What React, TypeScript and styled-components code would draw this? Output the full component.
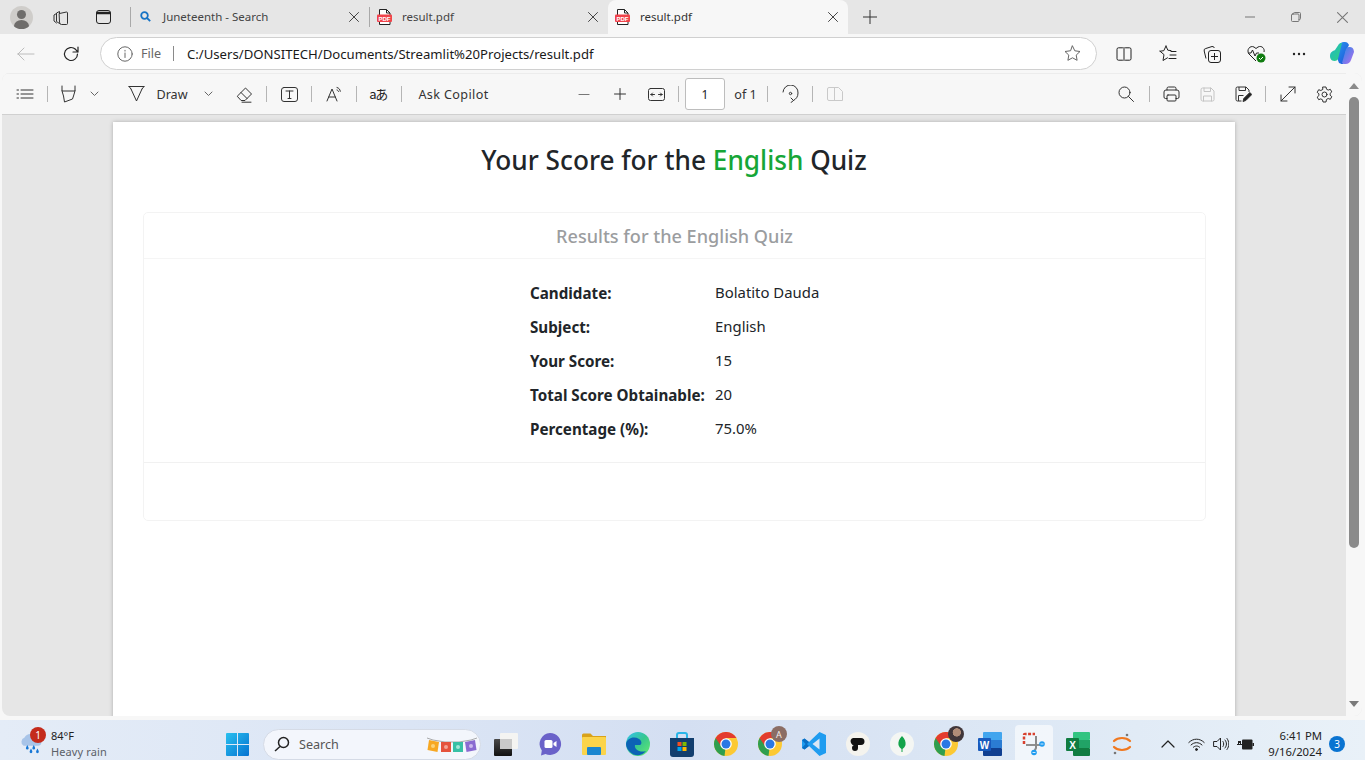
import React from "react";
import styled, { createGlobalStyle } from "styled-components";

const Global = createGlobalStyle`
  html, body { margin: 0; padding: 0; height: 100%; overflow: hidden; }
  body { font-family: "Noto Sans", "Open Sans", sans-serif; color: #222; }
  #root { height: 760px; width: 1365px; }
`;

const Screen = styled.div`
  display: flex; flex-direction: column; width: 1365px; height: 760px; overflow: hidden; background: #f7f7f7;
`;

/* ---------- tab strip ---------- */
const TabStrip = styled.div`
  display: flex; align-items: stretch; height: 34px; flex: none; background: #e6e6e6;
`;
const StripBtn = styled.div<{ $w: number; $ml?: number }>`
  display: flex; align-items: center; justify-content: center; flex: none;
  width: ${p => p.$w}px; margin-left: ${p => p.$ml ?? 0}px;
`;
const Avatar = styled.div`
  position: relative; width: 23px; height: 23px; border-radius: 50%; background: #cfcdca; overflow: hidden;
  &::before { content: ""; position: absolute; left: 7px; top: 4px; width: 9px; height: 9px; border-radius: 50%; background: #6f6d6b; }
  &::after { content: ""; position: absolute; left: 4px; top: 14px; width: 15px; height: 12px; border-radius: 50%; background: #6f6d6b; }
`;
const TabSep = styled.div`
  width: 1px; height: 20px; background: #a9a9a9; align-self: center; flex: none;
`;
const Tab = styled.div<{ $active?: boolean; $w: number }>`
  display: flex; align-items: center; flex: none; width: ${p => p.$w}px; padding: 0 10px 0 7px; box-sizing: border-box;
  font-size: 11.5px; color: #444;
  ${p => p.$active && `background:#f7f7f7; border-radius: 8px 8px 0 0; color:#333;`}
`;
const TabIcon = styled.span`
  width: 15px; height: 16px; display: flex; align-items: center; justify-content: center; flex: none; margin-bottom: 1px;
`;
const TabTitle = styled.span`
  flex: 1; margin: 0 0 2px 10px; white-space: nowrap;
`;

/* ---------- address bar ---------- */
const AddressRow = styled.div`
  display: flex; align-items: center; height: 39px; flex: none; background: #f7f7f7;
`;
const NavBtn = styled.div<{ $w: number }>`
  display: flex; align-items: center; justify-content: center; flex: none; width: ${p => p.$w}px;
`;
const Pill = styled.div`
  display: flex; align-items: center; box-sizing: border-box; width: 997px; height: 33px; margin: 0 5px 0 10px; padding: 0 15px 0 16px;
  background: #fff; border: 1px solid #d0d0d0; border-radius: 17px; flex: none; font-size: 12.6px;
`;
const FileLabel = styled.span`
  margin-left: 8px; color: #666; width: 32px;
`;
const PillSep = styled.span`
  width: 1px; height: 15px; background: #8a8a8a; flex: none;
`;
const Url = styled.span`
  margin-left: 13px; padding-top: 1px; flex: 1; font-size: 13.15px; color: #1a1a1a; white-space: nowrap;
`;

/* ---------- pdf toolbar ---------- */
const ViewerShell = styled.div`
  flex: 1; min-height: 0; display: flex; margin: 0 3px 4px 2px; background: #e6e6e6; border-radius: 8px; overflow: hidden;
`;
const ViewerMain = styled.div`
  flex: 1; min-width: 0; display: flex; flex-direction: column;
`;
const Toolbar = styled.div`
  display: flex; align-items: center; height: 42px; flex: none; padding-left: 5px; box-sizing: border-box;
  background: #f7f7f7; border-bottom: 1px solid #d0d0d0; border-top: 1px solid #ececec; font-size: 12.6px; color: #333;
`;
const Tool = styled.div<{ $w: number; $ml?: number }>`
  display: flex; align-items: center; justify-content: center; flex: none; white-space: nowrap;
  width: ${p => p.$w}px; margin-left: ${p => p.$ml ?? 0}px;
`;
const ToolSep = styled.div<{ $ml?: number }>`
  flex: none; width: 8px; margin-left: ${p => p.$ml ?? 0}px; display: flex; justify-content: center;
  &::before { content: ""; width: 1px; height: 16px; background: #b5b5b5; }
`;
const AskLabel = styled.span`
  letter-spacing: .03em;
`;
const TranslateGlyph = styled.span`
  font-family: "Noto Sans CJK JP", "Noto Sans", sans-serif; font-size: 13px; letter-spacing: -1.5px; color: #222; line-height: 16px;
`;
const PageInput = styled.div`
  flex: none; box-sizing: border-box; width: 40px; height: 32px; margin-left: 3px; background: #fff;
  border: 1px solid #bdbdbd; border-radius: 3px; display: flex; align-items: center; justify-content: center; font-size: 12px; color: #222;
`;

/* ---------- document ---------- */
const DocArea = styled.div`
  flex: 1; min-height: 0; padding: 7px 0 0 111px; overflow: hidden;
`;
const Sheet = styled.div`
  box-sizing: border-box; width: 1122px; height: 640px; background: #fff; box-shadow: 0 0 4px rgba(0,0,0,.25); padding: 21px 30px 0;
`;
const Heading = styled.h1`
  margin: 0; height: 69px; text-align: center; font-size: 26.2px; line-height: 34px; font-weight: 500; color: #212529;
`;
const Accent = styled.span`
  color: #16a637;
`;
const Card = styled.div`
  box-sizing: border-box; width: 1063px; height: 309px; border: 1px solid #f3f3f3; border-radius: 5px; display: flex; flex-direction: column;
`;
const CardHead = styled.div`
  height: 45px; flex: none; border-bottom: 1px solid #f5f5f5; display: flex; align-items: center; justify-content: center;
  font-size: 18.1px; font-weight: 500; color: #9b9d9f;
`;
const CardBody = styled.div`
  flex: 1; display: grid; grid-template-columns: 185px 104px; justify-content: center; align-content: start; padding-top: 17px; border-bottom: 1px solid #f1f1f1;
`;
const CardFoot = styled.div`
  height: 57px; flex: none;
`;
const Label = styled.div`
  height: 34px; line-height: 34px; font-size: 15.2px; font-weight: 700; color: #212529; white-space: nowrap;
`;
const Value = styled.div`
  height: 34px; line-height: 32px; font-size: 14.9px; color: #212529; white-space: nowrap;
`;

/* ---------- scrollbar ---------- */
const ScrollTrack = styled.div`
  width: 16px; flex: none; background: #f7f7f7; display: flex; flex-direction: column; align-items: center;
`;
const ScrollArrow = styled.div<{ $up?: boolean }>`
  width: 0; height: 0; border-left: 5px solid transparent; border-right: 5px solid transparent; flex: none;
  ${p => p.$up ? `border-bottom: 6px solid #8b8b8b; margin-top: 10px;` : `border-top: 6px solid #7a7a7a; margin-top: 153px;`}
`;
const ScrollThumb = styled.div`
  width: 10px; height: 451px; background: #8b8b8b; border-radius: 5px; margin-top: 8px; flex: none;
`;

/* ---------- taskbar ---------- */
const Taskbar = styled.div`
  height: 40px; flex: none; display: flex; align-items: center; padding-top: 8px; box-sizing: border-box;
  background: linear-gradient(90deg, #e4ecf7 0%, #dbe5f5 30%, #d4dff2 50%, #dde8f5 75%, #e9f1f8 100%);
`;
const Weather = styled.div`
  width: 215px; flex: none; display: flex; align-items: center; height: 100%; padding-left: 19px; box-sizing: border-box; position: relative;
`;
const Badge = styled.span`
  position: absolute; left: 30px; top: -1px; width: 16px; height: 16px; border-radius: 50%; background: #c42b1c; color: #fff;
  font-size: 10px; display: flex; align-items: center; justify-content: center;
`;
const WeatherText = styled.div`
  margin-left: 8px; display: flex; flex-direction: column; font-size: 11px; line-height: 16px; white-space: nowrap;
`;
const Muted = styled.span`
  color: #5b6068; letter-spacing: .01em;
`;
const TaskSlot = styled.div<{ $active?: boolean }>`
  position: relative; flex: none; display: flex; align-items: center; justify-content: center; border-radius: 4px;
  width: ${p => p.$active ? 38 : 44}px; height: ${p => p.$active ? 38 : 36}px; margin: ${p => p.$active ? "0 3px" : "0"};
  ${p => p.$active && `background: rgba(255,255,255,.6);`}
`;
const TaskSearch = styled.div`
  flex: none; display: flex; align-items: center; box-sizing: border-box; width: 218px; height: 31px; margin-left: 4px; padding-left: 10px;
  background: #f3f6fc; border: 1px solid #d5dbe6; border-radius: 16px; font-size: 12.6px; color: #555; position: relative;
`;
const SearchWord = styled.span`
  margin-left: 9px;
`;
const Bunting = styled.span`
  position: absolute; right: 3px; top: 7px; display: flex;
`;
const StartGap = styled.div`
  width: 3px; flex: none;
`;
const Tray = styled.div`
  flex: 1; display: flex; align-items: center; padding-left: 13px;
`;
const TrayBtn = styled.div<{ $w: number }>`
  width: ${p => p.$w}px; flex: none; display: flex; justify-content: center; align-items: center;
`;
const Clock = styled.div`
  width: 61px; flex: none; text-align: right; font-size: 11.3px; line-height: 16px; color: #222; white-space: nowrap;
`;
const NotifCount = styled.div`
  width: 16px; height: 16px; margin-left: 7px; flex: none; border-radius: 50%; background: #0a74d1; color: #fff; font-size: 10px;
  display: flex; align-items: center; justify-content: center;
`;
const CornerBadge = styled.span`
  position: absolute; top: 0; right: 5px; width: 16px; height: 16px; border-radius: 50%; background: #8b6d64; color: #f4ecea; font-size: 9px;
  display: flex; align-items: center; justify-content: center;
`;
const PhotoBadge = styled.span`
  position: absolute; top: 0; right: 4px; width: 16px; height: 16px; border-radius: 50%;
  background: radial-gradient(circle at 55% 40%, #b08c78 0 30%, #40363a 34% 100%);
`;

/* ---------- icons ---------- */
const S = (p: { w?: number; h?: number; vb?: string; children: React.ReactNode; c?: string; sw?: number }) => (
  <svg width={p.w ?? 16} height={p.h ?? 16} viewBox={p.vb ?? "0 0 16 16"} fill="none" stroke={p.c ?? "#333"} strokeWidth={p.sw ?? 1} strokeLinecap="round" strokeLinejoin="round">{p.children}</svg>
);
const PdfIcon = () => (
  <svg width="15" height="16" viewBox="0 0 15 16">
    <path d="M2.5.5h7l3.5 3.5v11.5h-10.500z" fill="#fff" stroke="#222" />
    <path d="M9.500.5v3.500h3.500" fill="none" stroke="#222" />
    <rect x="0" y="5.500" width="15" height="7.500" rx="1" fill="#f0444b" />
    <text x="7.500" y="11.700" textAnchor="middle" fontSize="6" fontWeight="700" fill="#fff" fontFamily="Liberation Sans, sans-serif">PDF</text>
  </svg>
);
const CloseX = ({ s = 10, c = "#444" }: { s?: number; c?: string }) => (
  <S w={s} h={s} vb="0 0 10 10" c={c}><path d="M.5.5l9 9M9.500.5l-9 9" /></S>
);
const Chevron = () => <S w={9} h={6} vb="0 0 9 6" c="#666"><path d="M1 1l3.500 3.500L8 1" /></S>;
const Chrome = () => (
  <svg width="24" height="24" viewBox="0 0 24 24">
    <circle cx="12" cy="12" r="12" fill="#fcc934" />
    <path d="M1.600 6A12 12 0 0 0 10.500 23.900L12 12z" fill="#2f9e4f" />
    <path d="M1.600 6A12 12 0 0 1 22.400 6H12L7 14z" fill="#e33b2e" />
    <circle cx="12" cy="12" r="5.800" fill="#fff" />
    <circle cx="12" cy="12" r="4.500" fill="#2a78e4" />
  </svg>
);

const toolbarIcons = {
  list: <S w={18} h={14} vb="0 0 18 14"><path d="M1 3h1.500M1 7h1.500M1 11h1.500M5 3h12M5 7h12M5 11h12" /></S>,
  highlight: <S w={17} h={18} vb="0 0 17 18"><path d="M2 1v5h13V1M2 6l1.500 5 1 6 8-3 1-3L15 6" /></S>,
  draw: <S w={17} h={18} vb="0 0 17 18"><path d="M1 1.500h15M3 4l5.500 12L14 4" /><path d="M1 1.500L3 4M16 1.500L14 4" /></S>,
  eraser: <S w={17} h={17} vb="0 0 17 17"><path d="M1.500 10L9.500 2l6 6-6.500 6.500H5.500zM5 6.500l6 6M6 16.200h9" /></S>,
  text: <S w={17} h={15} vb="0 0 17 15"><rect x=".5" y=".5" width="16" height="14" rx="2.500" /><path d="M5 4h7M8.500 4v7.500M7 11.500h3" /></S>,
  read: <S w={17} h={16} vb="0 0 17 16"><path d="M1 15L6 3l5 12M2.800 11h6.500" /><path d="M11 1.500c2 .5 3 1.800 3.300 3.800M11 4c1 .3 1.300.8 1.500 1.500" /></S>,
  minus: <S w={12} h={3} vb="0 0 12 3" c="#777" sw={1.200}><path d="M1 1.500h10" /></S>,
  plus: <S w={12} h={12} vb="0 0 12 12"><path d="M.5 6h11M6 .5v11" /></S>,
  fit: <S w={17} h={13} vb="0 0 17 13"><rect x=".5" y=".5" width="16" height="12" rx="2" /><path d="M3 6.500h3.500M3 6.500l1.500-1.500M3 6.500L4.500 8M14 6.500h-3.500M14 6.500L12.500 5M14 6.500L12.500 8" /></S>,
  rotate: <S w={17} h={18} vb="0 0 17 18"><path d="M1 7a7 7 0 0 1 15 1c0 4-2 6-4.500 7.500" /><path d="M9 13l2.500 2.500L9 17.500" /><circle cx="8.500" cy="8.500" r="1.200" /></S>,
  twoPage: <S w={16} h={14} vb="0 0 16 14" c="#c9c9c9"><path d="M7.500.5H2a1.500 1.500 0 0 0-1.500 1.500v10A1.500 1.500 0 0 0 2 13.500h5.500M7.500.5v13M7.500.5h4l4 4v9h-8" /></S>,
  search: <S w={16} h={16}><circle cx="6.500" cy="6.500" r="5.500" /><path d="M10.500 10.500l5 5" /></S>,
  print: <S w={17} h={16} vb="0 0 17 16"><path d="M4 4V2.500A1.500 1.500 0 0 1 5.500 1h6A1.500 1.500 0 0 1 13 2.500V4M4 12.500H2.500A1.500 1.500 0 0 1 1 11V6a2 2 0 0 1 2-2h11a2 2 0 0 1 2 2v5a1.500 1.500 0 0 1-1.500 1.500H13" /><rect x="4" y="9" width="9" height="6" rx="1" /></S>,
  save: <S w={15} h={15} vb="0 0 15 15" c="#c4c4c4"><path d="M1 2.500A1.500 1.500 0 0 1 2.500 1h8.500L14 4v8.500a1.500 1.500 0 0 1-1.500 1.500h-10A1.500 1.500 0 0 1 1 12.500zM4 1v3.500h6.500V1M3.500 14V9h8v5" /></S>,
  saveAs: <svg width="17" height="16" viewBox="0 0 17 16" fill="none" stroke="#333" strokeLinejoin="round"><path d="M6.500 15H2.500A1.500 1.500 0 0 1 1 13.500v-11A1.500 1.500 0 0 1 2.500 1h8.500l3 3v2M4 1v3.500h6.500V1M3.500 15V9.500h5" /><path d="M8 15.500l.8-3 6-6 2 2-6 6z" fill="#222" /></svg>,
  expand: <S w={16} h={16}><path d="M1 15L15 1M9 1h6v6M1 9v6h6" /></S>,
  gear: <S w={17} h={17} vb="0 0 17 17"><path d="M7 1h3l.5 2.200 1.700.9 2.100-.8 1.500 2.600-1.700 1.500v1.800l1.700 1.500-1.500 2.600-2.100-.8-1.700.9L10 16H7l-.5-2.200-1.700-.9-2.100.8L1.200 11.100l1.700-1.500V7.800L1.200 6.300l1.500-2.600 2.100.8 1.700-.9z" /><circle cx="8.500" cy="8.500" r="2.500" /></S>,
};

const rows: [string, string][] = [
  ["Candidate:", "Bolatito Dauda"],
  ["Subject:", "English"],
  ["Your Score:", "15"],
  ["Total Score Obtainable:", "20"],
  ["Percentage (%):", "75.0%"],
];

const PinnedIcons = () => (
  <>
    <TaskSlot>
      <svg width="24" height="23" viewBox="0 0 24 23"><defs><linearGradient id="thumbA" x1="0" y1="0" x2="0" y2="1"><stop offset="0" stopColor="#4a4a4a" /><stop offset="1" stopColor="#111" /></linearGradient></defs><rect x="0" y="6" width="18" height="17" rx="1" fill="url(#thumbA)" /><rect x="6" y="0" width="18" height="16" rx="1" fill="#f4f4f2" /><rect x="6" y="6" width="12" height="10" fill="#c9c9c9" /></svg>
    </TaskSlot>
    <TaskSlot>
      <svg width="24" height="24" viewBox="0 0 24 24"><path d="M12 1a11 11 0 1 1-4.500 21L3 23.500l.8-5A11 11 0 0 1 12 1z" fill="#6a62c9" /><rect x="6.500" y="8" width="8" height="8" rx="1.500" fill="#fff" /><path d="M15.500 11l3-2v6l-3-2z" fill="#fff" /></svg>
    </TaskSlot>
    <TaskSlot>
      <svg width="24" height="22" viewBox="0 0 24 22"><path d="M0 2a1.500 1.500 0 0 1 1.500-1.500h7L11 3h13v3H0z" fill="#d9a21a" /><rect y="4" width="24" height="18" rx="1" fill="#fbd44b" /><rect x="5" y="14" width="14" height="8" rx="1" fill="#1a86d0" /></svg>
    </TaskSlot>
    <TaskSlot>
      <svg width="24" height="24" viewBox="0 0 24 24"><defs><linearGradient id="edgeA" x1="0" y1="0" x2="1" y2="1"><stop offset="0" stopColor="#35c1f1" /><stop offset=".5" stopColor="#36c78f" /><stop offset="1" stopColor="#66eb6e" /></linearGradient></defs><circle cx="12" cy="12" r="12" fill="url(#edgeA)" /><path d="M0 12C1 6 8 4 13 7c3 2 3 5 1 6H9c-1 4 4 8 11 6-5 6-12 5-16 1-2-2-4-5-4-8z" fill="#0c62b5" /></svg>
    </TaskSlot>
    <TaskSlot>
      <svg width="24" height="25" viewBox="0 0 24 25"><path d="M7 6V3a2 2 0 0 1 2-2h6a2 2 0 0 1 2 2v3" fill="none" stroke="#29b5e8" strokeWidth="2" /><path d="M0 6h24v16a3 3 0 0 1-3 3H3a3 3 0 0 1-3-3z" fill="#123e6e" /><rect x="7.500" y="10" width="4" height="4" fill="#f25022" /><rect x="12.500" y="10" width="4" height="4" fill="#7fba00" /><rect x="7.500" y="15" width="4" height="4" fill="#00a4ef" /><rect x="12.500" y="15" width="4" height="4" fill="#ffb900" /></svg>
    </TaskSlot>
    <TaskSlot><Chrome /></TaskSlot>
    <TaskSlot><Chrome /><CornerBadge>A</CornerBadge></TaskSlot>
    <TaskSlot>
      <svg width="24" height="24" viewBox="0 0 24 24"><path d="M17.500 0L24 3v18l-6.500 3L7 14l-4.500 3.500L0 16V8l2.500-1.500L7 10z" fill="#1f9cf0" /><path d="M17.500 6.500L10.500 12l7 5.500z" fill="#d8e6f5" /><path d="M0 8l2.500-1.500L7 10l-2 2 2 2-4.500 3.500L0 16l3.500-4z" fill="#0a6fc4" /></svg>
    </TaskSlot>
    <TaskSlot>
      <svg width="24" height="24" viewBox="0 0 24 24"><circle cx="12" cy="12" r="12" fill="#f4f3ee" /><path d="M7 6h8a3 3 0 0 1 0 7h-3v3a3 3 0 0 1-6 0 3 3 0 0 1 3-3h1a3 3 0 0 1-3-7z" fill="#111" /></svg>
    </TaskSlot>
    <TaskSlot>
      <svg width="24" height="24" viewBox="0 0 24 24"><circle cx="12" cy="12" r="12" fill="#f4f6f3" /><path d="M12 4c3 3 4 6 3.500 9-.5 2-2 3-3 4v3h-1v-3c-1-1-2.500-2-3-4C8 10 9 7 12 4z" fill="#13a34a" /></svg>
    </TaskSlot>
    <TaskSlot><Chrome /><PhotoBadge /></TaskSlot>
    <TaskSlot>
      <svg width="24" height="24" viewBox="0 0 24 24"><rect x="5" y="0" width="19" height="8" rx="1" fill="#41a5ee" /><rect x="5" y="8" width="19" height="8" fill="#2b7cd3" /><rect x="5" y="16" width="19" height="8" rx="1" fill="#103f91" /><rect x="0" y="6" width="13" height="13" rx="1" fill="#185abd" /><text x="6.500" y="16.500" textAnchor="middle" fontSize="10" fontWeight="700" fill="#fff" fontFamily="Liberation Sans, sans-serif">W</text></svg>
    </TaskSlot>
    <TaskSlot $active>
      <svg width="24" height="24" viewBox="0 0 24 24" fill="none"><path d="M2 12V3a1 1 0 0 1 1-1h10" stroke="#d8412f" strokeWidth="2.500" strokeDasharray="3 1.500" /><path d="M4 13h16" stroke="#8f8f8f" strokeWidth="2" /><path d="M14 4v12l-2 4" stroke="#8a8a8a" strokeWidth="2" /><circle cx="20" cy="12" r="2.800" fill="#1f9cf0" /><circle cx="12" cy="20.500" r="2.800" fill="#1f9cf0" /><path d="M18.500 12h3M10.500 20.500h3" stroke="#fff" strokeWidth=".8" /></svg>
    </TaskSlot>
    <TaskSlot>
      <svg width="24" height="24" viewBox="0 0 24 24"><rect x="7" y="0" width="17" height="8" rx="1" fill="#33c481" /><rect x="7" y="8" width="17" height="8" fill="#21a366" /><rect x="7" y="16" width="17" height="8" rx="1" fill="#107c41" /><rect x="0" y="6" width="13" height="13" rx="1" fill="#107c41" /><text x="6.500" y="16.500" textAnchor="middle" fontSize="10" fontWeight="700" fill="#fff" fontFamily="Liberation Sans, sans-serif">X</text></svg>
    </TaskSlot>
    <TaskSlot>
      <svg width="20" height="24" viewBox="0 0 20 24" fill="none"><path d="M2 9c4-4 12-4 16 0" stroke="#f0781f" strokeWidth="2.200" strokeLinecap="round" /><path d="M2 15c4 4 12 4 16 0" stroke="#f0781f" strokeWidth="2.200" strokeLinecap="round" /><circle cx="15" cy="3" r="1.300" fill="#777" /><circle cx="3" cy="21" r="1.300" fill="#777" /></svg>
    </TaskSlot>
  </>
);

export default function App() {
  return (
    <Screen>
      <Global />
      <TabStrip>
        <StripBtn $w={23} $ml={10}><Avatar /></StripBtn>
        <StripBtn $w={18} $ml={19}>
          <S w={16} h={16}><path d="M6.500 4.500l7-1.500a1 1 0 0 1 1 1v10.500a1 1 0 0 1-1 1H8.500a2 2 0 0 1-2-2z" /><path d="M6.500 4.500V2.500l-3 1.500v8.500l3 2" /><path d="M3.500 4.500L1 6v6l2.500 2" /></S>
        </StripBtn>
        <StripBtn $w={16} $ml={25}>
          <svg width="15" height="14" viewBox="0 0 15 14" fill="none" stroke="#222"><rect x=".5" y=".5" width="14" height="13" rx="2.500" /><path d="M.5 3h14" strokeWidth="2.500" /></svg>
        </StripBtn>
        <StripBtn $w={19} />
        <TabSep />
        <Tab $w={238}><TabIcon><svg width="11" height="11" viewBox="0 0 11 11" fill="none" stroke="#1673c5" strokeWidth="1.800"><circle cx="4.500" cy="4.500" r="3.300" /><path d="M7 7l3.200 3.200" /></svg></TabIcon><TabTitle>Juneteenth - Search</TabTitle><CloseX /></Tab>
        <TabSep />
        <Tab $w={238}><TabIcon><PdfIcon /></TabIcon><TabTitle>result.pdf</TabTitle><CloseX /></Tab>
        <Tab $active $w={240}><TabIcon><PdfIcon /></TabIcon><TabTitle>result.pdf</TabTitle><CloseX /></Tab>
        <StripBtn $w={14} $ml={15}><S w={14} h={14} vb="0 0 14 14"><path d="M0 7h14M7 0v14" /></S></StripBtn>
        <StripBtn $w={10} $ml={368}><S w={10} h={2} vb="0 0 10 2" c="#777"><path d="M0 1h10" /></S></StripBtn>
        <StripBtn $w={10} $ml={36}><S w={10} h={10} vb="0 0 10 10" c="#777"><rect x=".5" y="2" width="7.500" height="7.500" rx="1" /><path d="M2.500 2V1.500a1 1 0 0 1 1-1h5a1 1 0 0 1 1 1v5a1 1 0 0 1-1 1H8" /></S></StripBtn>
        <StripBtn $w={12} $ml={35}><CloseX s={11} c="#777" /></StripBtn>
      </TabStrip>

      <AddressRow>
        <NavBtn $w={52}><S w={18} h={14} vb="0 0 18 14" c="#bcbcbc"><path d="M1 7h16M1 7l6-6M1 7l6 6" /></S></NavBtn>
        <NavBtn $w={38}><S w={18} h={18} vb="0 0 18 18" c="#222" sw={1.200}><path d="M15.500 9a6.500 6.500 0 1 1-2-4.700L16 7M16 2v5h-5" /></S></NavBtn>
        <Pill>
          <S w={16} h={16} c="#666"><circle cx="8" cy="8" r="7.200" /><path d="M8 7v4.500M8 4.300v.8" /></S>
          <FileLabel>File</FileLabel>
          <PillSep />
          <Url>C:/Users/DONSITECH/Documents/Streamlit%20Projects/result.pdf</Url>
          <S w={17} h={17} vb="0 0 17 17" c="#666"><path d="M8.500 1l2.300 4.800 5.200.7-3.800 3.600.9 5.200-4.600-2.500-4.600 2.500.9-5.200L1 6.500l5.200-.7z" /></S>
        </Pill>
        <NavBtn $w={44}>
          <S w={16} h={14} vb="0 0 16 14" c="#222"><path d="M6.500 .8H2.500A1.500 1.500 0 0 0 1 2.300v9.400a1.500 1.500 0 0 0 1.500 1.500h4M9.500 .8h4A1.500 1.500 0 0 1 15 2.300v9.400a1.500 1.500 0 0 1-1.500 1.500h-4M8 0v14" /></S>
        </NavBtn>
        <NavBtn $w={44}>
          <S w={18} h={17} vb="0 0 18 17" c="#222"><path d="M7 1l1.800 4.200 3.200.4M1 6.200l4 3.400L4 15.500l4.500-2.700M12 6.500h5M11 10h6M10 13.500h7M1 6.200l3.800-.5L7 1" /></S>
        </NavBtn>
        <NavBtn $w={44}>
          <svg width="18" height="18" viewBox="0 0 18 18" fill="none" stroke="#222"><path d="M3 13.500L1.200 6A2 2 0 0 1 2.800 3.500L9 1.500a2 2 0 0 1 2.300 1.500" /><rect x="5.500" y="5.500" width="12" height="12" rx="2.500" /><path d="M11.500 8v7M8 11.500h7" /></svg>
        </NavBtn>
        <NavBtn $w={44}>
          <svg width="19" height="18" viewBox="0 0 19 18" fill="none" stroke="#222"><path d="M9 16L2 9C-1 5 3 0 7 2l2 1.500L11 2c4-2 7 2 6 5" /><path d="M1 8h3l1.500-3L8 11l1.500-3H12" /><circle cx="14" cy="13" r="4.500" fill="#107c10" stroke="none" /><path d="M12 13l1.500 1.500 2.500-2.500" stroke="#fff" /></svg>
        </NavBtn>
        <NavBtn $w={42}><svg width="14" height="4" viewBox="0 0 14 4" fill="#222"><circle cx="2" cy="2" r="1.200" /><circle cx="7" cy="2" r="1.200" /><circle cx="12" cy="2" r="1.200" /></svg></NavBtn>
        <NavBtn $w={44}>
          <svg width="24" height="23" viewBox="0 0 24 23"><defs><linearGradient id="cpA" x1="0" y1="0" x2="1" y2="1"><stop offset="0" stopColor="#1fb6c9" /><stop offset="1" stopColor="#2fd27f" /></linearGradient><linearGradient id="cpB" x1="0" y1="0" x2="1" y2="1"><stop offset="0" stopColor="#2b9cf0" /><stop offset="1" stopColor="#1a50d8" /></linearGradient><linearGradient id="cpC" x1="0" y1="0" x2="1" y2="1"><stop offset="0" stopColor="#2a8ae6" /><stop offset="1" stopColor="#b66cf0" /></linearGradient></defs><path d="M15 0c-3-.2-5 1-6 4L5.500 12 9 21c2 1 3 1 4 1l3-13L19 3c-1-2-2-3-4-3z" fill="url(#cpB)" /><path d="M8 3.500C9 1.500 10 1 12 1L8.500 15c-.5 3-2 4-4 4C1 19 0 16 0 14c0-4 3-5 5-6z" fill="url(#cpA)" /><path d="M15 22c3 .2 5-1 6-4l3-8c0-2-1-5-4-5-2 0-3 .5-4 2L12 21c1 1 2 1 3 1z" fill="url(#cpC)" /></svg>
        </NavBtn>
      </AddressRow>

      <ViewerShell>
        <ViewerMain>
          <Toolbar>
            <Tool $w={36}>{toolbarIcons.list}</Tool>
            <ToolSep />
            <Tool $w={34}>{toolbarIcons.highlight}</Tool>
            <Tool $w={18}><Chevron /></Tool>
            <Tool $w={24} $ml={21}>{toolbarIcons.draw}</Tool>
            <Tool $w={32} $ml={8}>Draw</Tool>
            <Tool $w={18} $ml={11}><Chevron /></Tool>
            <Tool $w={36} $ml={9}>{toolbarIcons.eraser}</Tool>
            <ToolSep />
            <Tool $w={30} $ml={4}>{toolbarIcons.text}</Tool>
            <ToolSep $ml={3} />
            <Tool $w={30} $ml={4}>{toolbarIcons.read}</Tool>
            <ToolSep $ml={3} />
            <Tool $w={30} $ml={3}><TranslateGlyph>aあ</TranslateGlyph></Tool>
            <ToolSep $ml={4} />
            <Tool $w={71} $ml={13}><AskLabel>Ask Copilot</AskLabel></Tool>
            <Tool $w={30} $ml={80}>{toolbarIcons.minus}</Tool>
            <Tool $w={30} $ml={6}>{toolbarIcons.plus}</Tool>
            <Tool $w={30} $ml={6}>{toolbarIcons.fit}</Tool>
            <ToolSep $ml={3} />
            <PageInput>1</PageInput>
            <Tool $w={21} $ml={10}>of 1</Tool>
            <ToolSep $ml={7} />
            <Tool $w={30} $ml={4}>{toolbarIcons.rotate}</Tool>
            <ToolSep $ml={3} />
            <Tool $w={30} $ml={4}>{toolbarIcons.twoPage}</Tool>
            <Tool $w={30} $ml={261}>{toolbarIcons.search}</Tool>
            <ToolSep $ml={4} />
            <Tool $w={30} $ml={3}>{toolbarIcons.print}</Tool>
            <Tool $w={30} $ml={6}>{toolbarIcons.save}</Tool>
            <Tool $w={30} $ml={6}>{toolbarIcons.saveAs}</Tool>
            <ToolSep $ml={3} />
            <Tool $w={30} $ml={4}>{toolbarIcons.expand}</Tool>
            <Tool $w={30} $ml={6}>{toolbarIcons.gear}</Tool>
          </Toolbar>
          <DocArea>
            <Sheet>
              <Heading>Your Score for the <Accent>English</Accent> Quiz</Heading>
              <Card>
                <CardHead>Results for the English Quiz</CardHead>
                <CardBody>
                  {rows.map(([k, v]) => (
                    <React.Fragment key={k}>
                      <Label>{k}</Label>
                      <Value>{v}</Value>
                    </React.Fragment>
                  ))}
                </CardBody>
                <CardFoot />
              </Card>
            </Sheet>
          </DocArea>
        </ViewerMain>
        <ScrollTrack>
          <ScrollArrow $up />
          <ScrollThumb />
          <ScrollArrow />
        </ScrollTrack>
      </ViewerShell>

      <Taskbar>
        <Weather>
          <svg width="24" height="24" viewBox="0 0 26 24"><path d="M5 14a5 5 0 0 1 1-9 7 7 0 0 1 13 1 4 4 0 0 1 2 8z" fill="#a8c4e8" /><path d="M9 13c2 3 2 5 0 5s-2-2 0-5zM16 13c2 3 2 5 0 5s-2-2 0-5zM13 17c2 3 2 5 0 5s-2-2 0-5zM20 17c2 3 2 5 0 5s-2-2 0-5z" fill="#1677d6" /></svg>
          <Badge>1</Badge>
          <WeatherText><span>84°F</span><Muted>Heavy rain</Muted></WeatherText>
        </Weather>
        <TaskSlot>
          <svg width="23" height="23" viewBox="0 0 23 23"><defs><linearGradient id="winA" x1="0" y1="0" x2="1" y2="1"><stop offset="0" stopColor="#29c0ef" /><stop offset="1" stopColor="#0572d1" /></linearGradient></defs><path d="M1 0h10v11H0V1a1 1 0 0 1 1-1zM12 0h10a1 1 0 0 1 1 1v10H12zM0 12h11v11H1a1 1 0 0 1-1-1zM12 12h11v10a1 1 0 0 1-1 1H12z" fill="url(#winA)" /></svg>
        </TaskSlot>
        <TaskSearch>
          <svg width="16" height="16" viewBox="0 0 16 16" fill="none" stroke="#222" strokeWidth="1.500"><circle cx="9.500" cy="6.500" r="5" /><path d="M6 10.500L1 15" /></svg>
          <SearchWord>Search</SearchWord>
          <Bunting>
            <svg width="50" height="16" viewBox="0 0 50 16">
              <path d="M0 1l6 2 12 2h14l12-2 6-2" fill="none" stroke="#888" strokeWidth=".7" />
              <path d="M2 3l10 2-1.500 10-10-2z" fill="#f7a823" /><circle cx="6" cy="9" r="2" fill="#fbd27a" />
              <path d="M14 5h10v10H14z" fill="#e5533d" /><circle cx="19" cy="10" r="2" fill="#f3a597" />
              <path d="M26 5h10v10H26z" fill="#37c0a5" /><circle cx="31" cy="10" r="2" fill="#a5e6d8" />
              <path d="M38 5l10-2 1.500 10-10 2z" fill="#8a6bd1" /><circle cx="44" cy="9" r="2" fill="#cbb9ee" />
            </svg>
          </Bunting>
        </TaskSearch>
        <StartGap />
        <PinnedIcons />
        <Tray>
          <TrayBtn $w={22}><S w={14} h={8} vb="0 0 14 8" c="#222" sw={1.200}><path d="M1 7l6-6 6 6" /></S></TrayBtn>
          <TrayBtn $w={34}><S w={17} h={13} vb="0 0 17 13" c="#222"><path d="M.8 4.500c4.500-4.500 11-4.500 15.400 0M3 7c3.200-3.200 7.800-3.200 11 0M5.300 9.300c1.800-1.800 4.600-1.800 6.400 0" /><circle cx="8.500" cy="11.500" r="1" fill="#222" /></S></TrayBtn>
          <TrayBtn $w={16}><S w={16} h={14} vb="0 0 16 14" c="#222"><path d="M1 4.500h3L7.500 1v12L4 9.500H1zM10 4.500c1 1.500 1 3.500 0 5M12 3c2 2.500 2 5.500 0 8M14 1.500c2.500 3.500 2.500 7.500 0 11" /></S></TrayBtn>
          <TrayBtn $w={32}><svg width="17" height="13" viewBox="0 0 17 13"><rect x="5" y="1.500" width="10.500" height="10" rx="1" fill="#222" /><rect x="15.500" y="5" width="1.500" height="3" fill="#222" /><path d="M0 6.500h5M2.500 3v2M1.500 3v3M3.500 3v3" stroke="#222" strokeWidth="1" /></svg></TrayBtn>
          <Clock>6:41 PM<br />9/16/2024</Clock>
          <NotifCount>3</NotifCount>
        </Tray>
      </Taskbar>
    </Screen>
  );
}
